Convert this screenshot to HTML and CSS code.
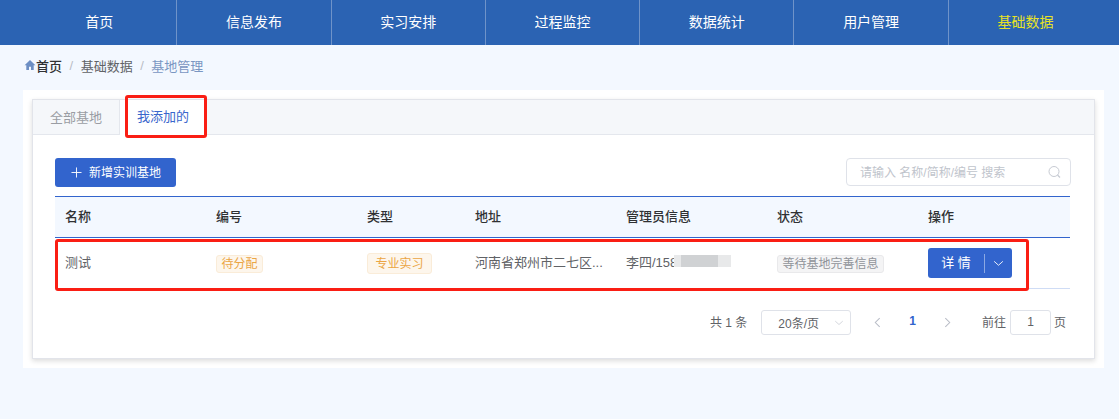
FILE: index.html
```html
<!DOCTYPE html>
<html lang="zh-CN">
<head>
<meta charset="utf-8">
<title>基地管理</title>
<link rel="stylesheet" href="styles.css">
</head>
<body>
<header class="topbar">
  <nav class="nav">
    <a class="nav-item">首页</a>
    <a class="nav-item">信息发布</a>
    <a class="nav-item">实习安排</a>
    <a class="nav-item">过程监控</a>
    <a class="nav-item">数据统计</a>
    <a class="nav-item">用户管理</a>
    <a class="nav-item is-active">基础数据</a>
  </nav>
</header>
<div class="crumbs">
  <svg class="home" viewBox="0 0 12 12" width="12" height="12"><path d="M6 1 .6 6.200h1.700V11h2.700V7.800h2V11h2.700V6.200h1.700z"/></svg>
  <span class="crumb-home">首页</span>
  <span class="sep">/</span>
  <span class="crumb-mid">基础数据</span>
  <span class="sep">/</span>
  <span class="crumb-last">基地管理</span>
</div>
<main class="panel">
  <section class="card">
    <div class="tabs">
      <div class="tab">全部基地</div>
      <div class="tab is-current">我添加的</div>
      <div class="mark mark-tab"></div>
    </div>
    <div class="card-body">
      <div class="toolbar">
        <button class="add-btn"><svg viewBox="0 0 12 12" width="11" height="11"><path d="M6 .5v11M.5 6h11" fill="none" stroke="#fff" stroke-width="1"/></svg><span>新增实训基地</span></button>
        <div class="search">
          <span class="search-text">请输入 名称/简称/编号 搜索</span>
          <svg viewBox="0 0 13 12" width="13" height="12"><circle cx="6" cy="5.500" r="5" fill="none" stroke="#c6cad2" stroke-width="1"/><path d="m9.500 9 2.500 2.500" stroke="#c6cad2" stroke-width="1.200"/></svg>
        </div>
      </div>
      <div class="table">
        <div class="row head">
          <div class="cell">名称</div>
          <div class="cell">编号</div>
          <div class="cell">类型</div>
          <div class="cell">地址</div>
          <div class="cell">管理员信息</div>
          <div class="cell">状态</div>
          <div class="cell">操作</div>
        </div>
        <div class="row body">
          <div class="cell text">测试</div>
          <div class="cell"><span class="tag tag-small">待分配</span></div>
          <div class="cell"><span class="tag tag-large">专业实习</span></div>
          <div class="cell text">河南省郑州市二七区...</div>
          <div class="cell text admin">李四/158<span class="blur"><i></i></span></div>
          <div class="cell"><span class="tag tag-gray">等待基地完善信息</span></div>
          <div class="cell">
            <div class="split-btn">
              <span class="split-main">详 情</span>
              <span class="split-line"></span>
              <svg viewBox="0 0 12 8" width="11" height="7"><path d="M1 1.500 6 6l5-4.500" fill="none" stroke="#fff" stroke-width="1"/></svg>
            </div>
          </div>
        </div>
        <div class="mark mark-row"></div>
      </div>
      <div class="pager">
        <span class="total">共 1 条</span>
        <div class="size"><span>20条/页</span><svg viewBox="0 0 12 8" width="10" height="6"><path d="M1 1.500 6 6l5-4.500" fill="none" stroke="#c6cad2" stroke-width="1"/></svg></div>
        <svg class="arrow" viewBox="0 0 8 12" width="7" height="11"><path d="M6.500 1 1.500 6l5 5" fill="none" stroke="#b8bcc6" stroke-width="1.200"/></svg>
        <span class="page">1</span>
        <svg class="arrow" viewBox="0 0 8 12" width="7" height="11"><path d="m1.500 1 5 5-5 5" fill="none" stroke="#b8bcc6" stroke-width="1.200"/></svg>
        <span class="goto">前往</span>
        <div class="page-input">1</div>
        <span class="goto-end">页</span>
      </div>
    </div>
  </section>
</main>
</body>
</html>
```
FILE: styles.css
```css
* { box-sizing: border-box; }
html, body { margin: 0; padding: 0; }
body {
  height: 419px;
  overflow: hidden;
  background: #f3f8ff;
  font-family: "Liberation Sans", "Noto Sans CJK SC", sans-serif;
  font-size: 13px;
  color: #606266;
}
.topbar { height: 45px; background: #2b63b3; padding: 0 15px 0 22px; }
.nav { display: grid; grid-template-columns: repeat(7, 154.300px); height: 45px; }
.nav-item {
  display: flex; align-items: center; justify-content: center;
  padding-bottom: 3px;
  color: #fff; font-size: 14px;
  border-left: 1px solid #6f93c9;
}
.nav-item:first-child { border-left: 0; }
.nav-item.is-active { color: #e7e225; }

.crumbs { height: 45px; display: flex; align-items: center; padding: 0 0 5px 24px; font-size: 13px; }
.home { fill: #6d8fc4; flex: none; }
.crumb-home { color: #303133; font-weight: 500; }
.sep { color: #b9bdc6; margin: 0 7.500px; }
.crumb-mid { color: #606266; }
.crumb-last { color: #7a96c2; }

.panel { margin: 0 15px 0 23px; height: 278px; background: #fff; padding: 9px 9px 0; }
.card { height: 260px; border: 1px solid #e2e4ea; box-shadow: 0 2px 5px rgba(0,0,0,.14); background: #fff; }
.tabs { position: relative; display: flex; height: 35px; background: #f5f7fa; border-bottom: 1px solid #e4e7ed; }
.tab { width: 87px; height: 35px; padding-bottom: 3px; display: flex; align-items: center; justify-content: center; color: #9a9da3; border-right: 1px solid #e4e7ed; }
.tab.is-current { background: #fff; color: #3a66cc; border-bottom: 1px solid #fff; }
.mark { position: absolute; border: 3px solid #fa1e14; border-radius: 3px; pointer-events: none; }
.mark-tab { left: 92px; top: -5px; width: 82px; height: 43px; }

.card-body { padding: 23px 22px 0; }
.toolbar { display: flex; justify-content: space-between; height: 29px; width: 1016px; }
.add-btn {
  width: 121px; height: 29px; padding: 0 0 2px 16px; border: 0; border-radius: 3px;
  background: #3264cd; color: #fff;
  display: flex; align-items: center; gap: 7px;
  font-family: "Liberation Sans", "Noto Sans CJK SC", sans-serif; font-size: 12px;
}
.add-btn svg { margin-top: 2px; }
.search {
  width: 225px; height: 28px; border: 1px solid #dfe2e9; border-radius: 4px;
  display: flex; align-items: center; justify-content: space-between; padding: 0 9px 2px 13px;
  color: #c0c4cc; font-size: 12px;
}
.search svg { margin-top: 2px; }

.table { position: relative; margin-top: 9px; width: 1015px; }
.row { display: grid; grid-template-columns: 151px 151px 108px 151px 151px 151px 152px; align-items: center; }
.head { height: 42px; background: #f3f8ff; border-top: 1px solid #3264cd; border-bottom: 1px solid #3264cd; color: #303133; font-weight: 500; font-size: 13px; }
.head .cell { padding-bottom: 4px; }
.body { height: 51px; border-bottom: 1px solid #cfdcf5; }
.cell { padding-left: 10px; min-width: 0; }
.text { padding-bottom: 4px; }
.tag { display: flex; align-items: center; justify-content: center; padding-bottom: 2px; border: 1px solid; border-radius: 3px; font-size: 12px; }
.tag-small { width: 47px; height: 18px; background: #fdf6ec; border-color: #faecd8; color: #eba544; margin-top: 1px; }
.tag-large { width: 65px; height: 21px; background: #fdf6ec; border-color: #faecd8; color: #eba544; }
.tag-gray { width: 107px; height: 18px; background: #f4f4f5; border-color: #e9e9eb; color: #909399; margin-top: 1px; }
.admin { display: flex; align-items: center; }
.blur { display: block; height: 12px; width: 57px; margin-left: -3px; padding-left: 7px; background: #e8e9ea; }
.blur i { display: block; height: 12px; width: 37px; background: #d0d2d4; }
.split-btn {
  width: 84px; height: 30px; border-radius: 3px; background: #3264cd; color: #fff;
  display: flex; align-items: center; font-size: 13px;
}
.split-main { width: 56px; padding-bottom: 3px; text-align: center; }
.split-line { width: 1px; height: 19px; background: #8ba8e3; margin-right: 8px; }

.mark-row { left: 0; top: 43px; width: 974px; height: 52px; }

.pager { display: flex; align-items: center; height: 25px; margin-top: 21px; width: 1015px; justify-content: flex-end; font-size: 12px; }
.pager > span { padding-bottom: 3px; }
.total { margin-right: 14px; }
.size {
  width: 90px; height: 25px; border: 1px solid #dfe2e9; border-radius: 3px;
  display: flex; align-items: center; justify-content: space-between; padding: 0 6px 0 16px;
  margin-right: 23px; font-size: 12px;
}
.arrow { flex: none; }
.page { color: #3264cd; font-weight: 700; margin: 0 28px; }
.goto { margin-left: 31px; margin-right: 4px; }
.page-input {
  width: 41px; height: 25px; border: 1px solid #dfe2e9; border-radius: 3px;
  display: flex; align-items: center; justify-content: center; padding-bottom: 2px;
}
.goto-end { margin: 0 4px 0 3px; }
```
